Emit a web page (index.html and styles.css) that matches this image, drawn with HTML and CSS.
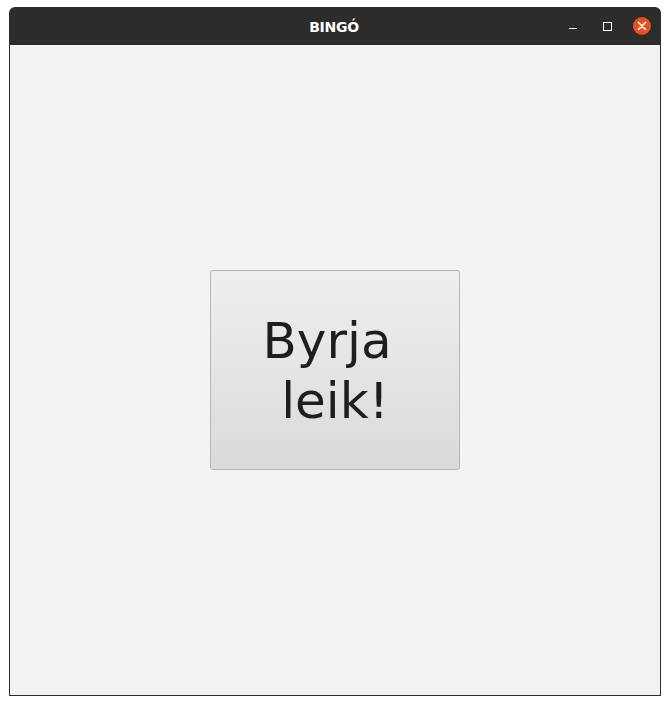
FILE: index.html
```html
<!DOCTYPE html>
<html lang="is">
<head>
<meta charset="utf-8">
<title>BINGÓ</title>
<link rel="stylesheet" href="styles.css">
</head>
<body>
<div class="window">
  <div class="titlebar">
    <span class="title">BINGÓ</span>
    <div class="controls">
      <span class="ctl ctl-min"></span>
      <span class="ctl ctl-max"></span>
      <span class="ctl ctl-close">
        <svg width="18" height="18" viewBox="0 0 18 18"><path d="M5.5 5.5 L12.5 12.5 M12.5 5.5 L5.5 12.5" stroke="#fff" stroke-width="1.6" stroke-linecap="round"/></svg>
      </span>
    </div>
  </div>
  <div class="content">
    <button class="start">Byrja&nbsp;<br>leik!</button>
  </div>
</div>
</body>
</html>
```
FILE: styles.css
```css
html, body {
  margin: 0;
  padding: 0;
  background: #ffffff;
}
body {
  padding: 7px 0 0 9px;
  width: 670px;
  height: 705px;
  box-sizing: border-box;
}
.window {
  width: 652px;
}
.titlebar {
  height: 38px;
  background: #2c2c2c;
  border-radius: 6px 6px 0 0;
  position: relative;
  display: flex;
  align-items: center;
  justify-content: center;
}
.title {
  font-family: "DejaVu Sans", sans-serif;
  font-weight: bold;
  font-size: 14px;
  color: #ffffff;
  letter-spacing: -0.3px;
  margin-top: 1px;
  margin-right: 2px;
}
.controls {
  position: absolute;
  right: 10px;
  top: 10px;
  display: flex;
  align-items: center;
  height: 18px;
}
.ctl {
  display: block;
  box-sizing: border-box;
}
.ctl-min {
  width: 8px;
  height: 1px;
  background: #ffffff;
  margin-top: 5px;
  margin-right: 26px;
}
.ctl-max {
  width: 9px;
  height: 9px;
  border: 1px solid #ffffff;
  margin-top: 1px;
  margin-right: 21px;
}
.ctl-close {
  width: 18px;
  height: 18px;
  border-radius: 50%;
  background: #e5501d;
}
.ctl-close svg {
  display: block;
}
.content {
  height: 650px;
  background: #f3f3f3;
  border: 1px solid #2e2e2e;
  border-top: none;
  display: flex;
  align-items: center;
  justify-content: center;
}
.start {
  width: 250px;
  height: 200px;
  box-sizing: border-box;
  border: 1px solid #b6b6b6;
  border-radius: 3px;
  background: linear-gradient(#efefef, #dadada);
  font-family: "DejaVu Sans", sans-serif;
  font-size: 50px;
  line-height: 60px;
  color: #1e1e1e;
  text-align: center;
  padding: 2px 0 0 0;
  margin: 0;
}
```
